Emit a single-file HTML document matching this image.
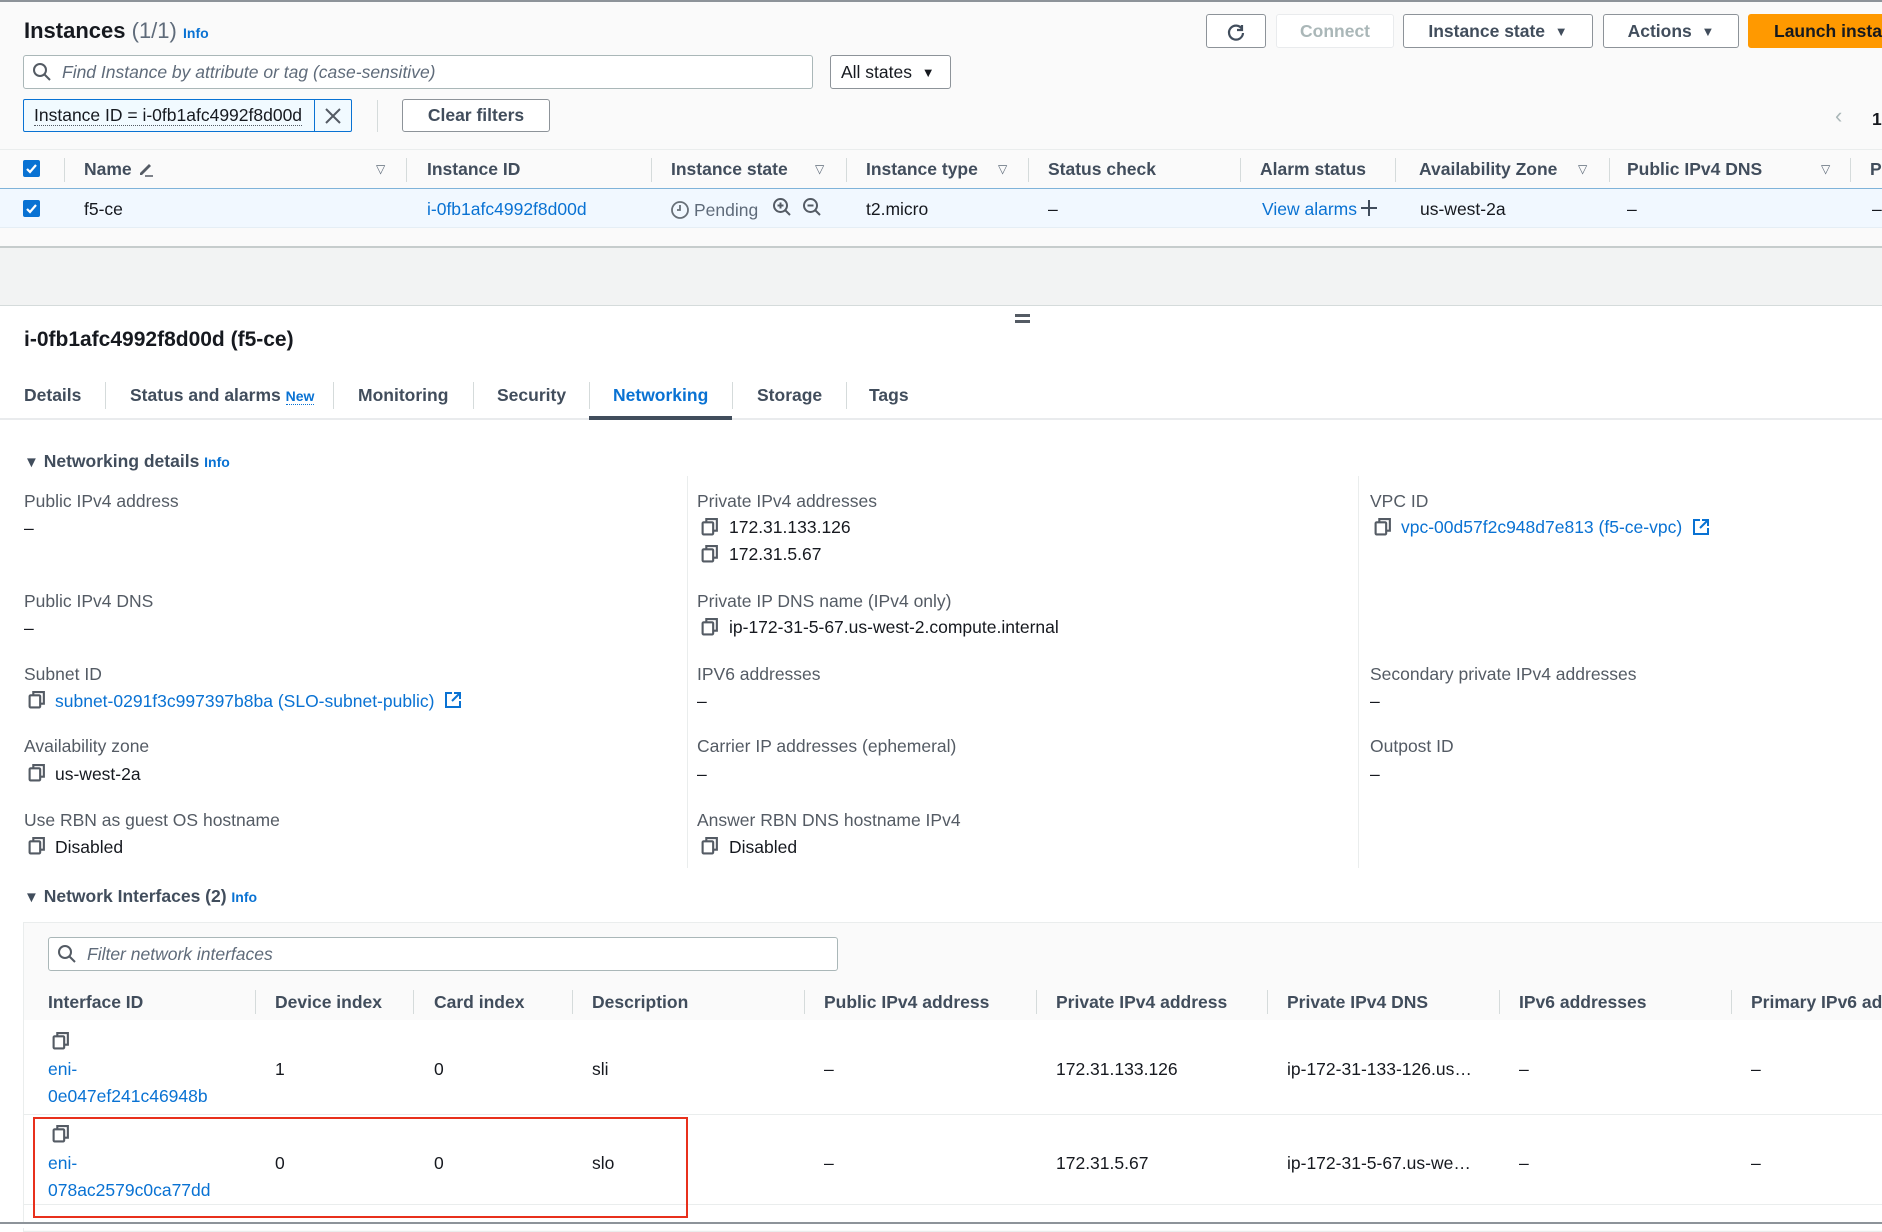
<!DOCTYPE html>
<html><head><meta charset="utf-8">
<style>
*{margin:0;padding:0;box-sizing:border-box}
body{width:1882px;height:1228px;overflow:hidden;background:#fff;font-family:"Liberation Sans",sans-serif;font-size:17.5px;color:#16191f;position:relative}
.a{position:absolute;white-space:nowrap;line-height:22px}
.b{font-weight:bold}
.lk{color:#0972d3}
.g{color:#5f6b7a}
.lbl{color:#545b64}
.hd{font-weight:bold;color:#414d5c}
.btn{position:absolute;border:1.5px solid #8d9399;border-radius:3px;background:#fff;font-weight:bold;color:#414d5c;display:flex;align-items:center;justify-content:center;font-size:17.5px;white-space:nowrap;overflow:hidden}
.sep{position:absolute;width:1px;background:#d5dbdb}
.cb{position:absolute;width:17px;height:17px;background:#0972d3;border-radius:2px}
.cp{position:absolute;width:18px;height:19px}
</style></head><body>
<div style="position:absolute;left:0;top:0;width:1882px;height:247px;background:#fafafa"></div>
<div style="position:absolute;left:0;top:0;width:1882px;height:2px;background:#8d9399"></div>
<div class="a" style="left:24px;top:18px;font-size:22px;line-height:26px"><span class="b">Instances</span> <span class="g">(1/1)</span> <span class="lk b" style="font-size:14px">Info</span></div>

<div class="btn" style="left:1206px;top:14px;width:60px;height:34px"><svg width="22" height="22" viewBox="0 0 22 22"><path d="M17 5v5h-5M17 9A7 7 0 1 0 18 13" fill="none" stroke="#414d5c" stroke-width="2.2"/></svg></div>
<div class="btn" style="left:1276px;top:14px;width:118px;height:34px;border-color:#e9ebed;color:#aab7b8">Connect</div>
<div class="btn" style="left:1403px;top:14px;width:190px;height:34px">Instance state&nbsp;&nbsp;<span style="font-size:13px">▼</span></div>
<div class="btn" style="left:1603px;top:14px;width:136px;height:34px">Actions&nbsp;&nbsp;<span style="font-size:13px">▼</span></div>
<div class="btn" style="left:1748px;top:14px;width:160px;height:34px;background:#ff9900;border-color:#ff9900;color:#16191f;justify-content:flex-start;padding-left:25px">Launch instances</div>

<div style="position:absolute;left:23px;top:55px;width:790px;height:34px;border:1.5px solid #aab7b8;border-radius:3px;background:#fff"></div>
<svg style="position:absolute;left:32px;top:62px" width="20" height="20" viewBox="0 0 20 20"><circle cx="8" cy="8" r="6" fill="none" stroke="#545b64" stroke-width="2"/><path d="M12.5 12.5L18 18" stroke="#545b64" stroke-width="2"/></svg>
<div class="a g" style="left:62px;top:61px;font-style:italic">Find Instance by attribute or tag (case-sensitive)</div>
<div class="btn" style="left:830px;top:55px;width:121px;height:34px;font-weight:normal;color:#16191f;justify-content:flex-start;padding-left:10px">All states&nbsp;&nbsp;<span style="font-size:13px">▼</span></div>

<div style="position:absolute;left:23px;top:99px;width:329px;height:33px;border:1px solid #0972d3;background:#f1faff;border-radius:2px"></div>
<div style="position:absolute;left:314px;top:99px;width:1px;height:33px;background:#0972d3"></div>
<div class="a" style="left:34px;top:105px;border-bottom:1px dotted #545b64;line-height:20px">Instance ID = i-0fb1afc4992f8d00d</div>
<svg style="position:absolute;left:323px;top:106px" width="20" height="20" viewBox="0 0 20 20"><path d="M3 3L17 17M17 3L3 17" stroke="#545b64" stroke-width="2"/></svg>
<div class="sep" style="left:377px;top:100px;height:32px"></div>
<div class="btn" style="left:402px;top:99px;width:148px;height:33px">Clear filters</div>
<div class="a" style="left:1835px;top:105px;color:#aab7b8;font-size:22px">‹</div>
<div class="a b" style="left:1872px;top:108px">1</div>

<div style="position:absolute;left:0;top:149px;width:1882px;height:1px;background:#eaeded"></div>
<div style="position:absolute;left:0;top:188px;width:1882px;height:40px;background:#f1f8ff;border-top:1.5px solid #7fb3d9;border-bottom:1px solid #e5eef5"></div>
<div class="cb" style="left:23px;top:160px"></div><svg style="position:absolute;left:23px;top:160px" width="17" height="17"><path d="M4 9l3 3 6-7" stroke="#fff" stroke-width="2.2" fill="none"/></svg>
<div class="cb" style="left:23px;top:200px"></div><svg style="position:absolute;left:23px;top:200px" width="17" height="17"><path d="M4 9l3 3 6-7" stroke="#fff" stroke-width="2.2" fill="none"/></svg>
<div class="sep" style="left:64px;top:158px;height:24px"></div>
<div class="a hd" style="left:84px;top:158px">Name</div>
<svg style="position:absolute;left:137px;top:160px" width="18" height="18" viewBox="0 0 18 18"><path d="M3 13L12 4l2 2-9 9H3z" fill="#545b64"/><path d="M8 16h8" stroke="#545b64" stroke-width="1.5"/></svg>
<div class="a g" style="left:376px;top:158px;font-size:12px">▽</div>
<div class="sep" style="left:406px;top:158px;height:24px"></div>
<div class="a hd" style="left:427px;top:158px">Instance ID</div>
<div class="sep" style="left:651px;top:158px;height:24px"></div>
<div class="a hd" style="left:671px;top:158px">Instance state</div>
<div class="a g" style="left:815px;top:158px;font-size:12px">▽</div>
<div class="sep" style="left:846px;top:158px;height:24px"></div>
<div class="a hd" style="left:866px;top:158px">Instance type</div>
<div class="a g" style="left:998px;top:158px;font-size:12px">▽</div>
<div class="sep" style="left:1028px;top:158px;height:24px"></div>
<div class="a hd" style="left:1048px;top:158px">Status check</div>
<div class="sep" style="left:1240px;top:158px;height:24px"></div>
<div class="a hd" style="left:1260px;top:158px">Alarm status</div>
<div class="sep" style="left:1395px;top:158px;height:24px"></div>
<div class="a hd" style="left:1419px;top:158px">Availability Zone</div>
<div class="a g" style="left:1578px;top:158px;font-size:12px">▽</div>
<div class="sep" style="left:1609px;top:158px;height:24px"></div>
<div class="a hd" style="left:1627px;top:158px">Public IPv4 DNS</div>
<div class="a g" style="left:1821px;top:158px;font-size:12px">▽</div>
<div class="sep" style="left:1850px;top:158px;height:24px"></div>
<div class="a hd" style="left:1870px;top:158px">P</div>

<div class="a" style="left:84px;top:198px">f5-ce</div>
<div class="a lk" style="left:427px;top:198px">i-0fb1afc4992f8d00d</div>
<svg style="position:absolute;left:670px;top:200px" width="20" height="20" viewBox="0 0 20 20"><circle cx="10" cy="10" r="8" fill="none" stroke="#687078" stroke-width="1.8"/><path d="M10 5v5H7" stroke="#687078" stroke-width="1.8" fill="none"/></svg>
<div class="a g" style="left:694px;top:199px">Pending</div>
<svg style="position:absolute;left:772px;top:197px" width="20" height="20" viewBox="0 0 20 20"><circle cx="8.5" cy="8.5" r="6.5" fill="none" stroke="#545b64" stroke-width="2"/><path d="M13 13l5 5M5.5 8.5h6M8.5 5.5v6" stroke="#545b64" stroke-width="2"/></svg>
<svg style="position:absolute;left:802px;top:197px" width="20" height="20" viewBox="0 0 20 20"><circle cx="8.5" cy="8.5" r="6.5" fill="none" stroke="#545b64" stroke-width="2"/><path d="M13 13l5 5M5.5 8.5h6" stroke="#545b64" stroke-width="2"/></svg>
<div class="a" style="left:866px;top:198px">t2.micro</div>
<div class="a" style="left:1048px;top:198px">–</div>
<div class="a lk" style="left:1262px;top:198px">View alarms</div>
<svg style="position:absolute;left:1360px;top:199px" width="18" height="18" viewBox="0 0 18 18"><path d="M9 1v16M1 9h16" stroke="#414d5c" stroke-width="2"/></svg>
<div class="a" style="left:1420px;top:198px">us-west-2a</div>
<div class="a" style="left:1627px;top:198px">–</div>
<div class="a" style="left:1872px;top:198px">–</div>

<div style="position:absolute;left:0;top:246px;width:1882px;height:60px;background:#f2f3f3;border-top:2px solid #c6cccc;border-bottom:1.5px solid #d5dbdb"></div>
<div style="position:absolute;left:1015px;top:314px;width:15px;height:2.5px;background:#545b64"></div>
<div style="position:absolute;left:1015px;top:320px;width:15px;height:2.5px;background:#545b64"></div>

<div class="a b" style="left:24px;top:327px;font-size:21px;line-height:26px">i-0fb1afc4992f8d00d (f5-ce)</div>

<div class="a hd" style="left:24px;top:384px">Details</div>
<div class="sep" style="left:105px;top:382px;height:27px"></div>
<div class="a hd" style="left:130px;top:384px">Status and alarms <span class="lk" style="font-size:14px;border-bottom:1px dotted #0972d3">New</span></div>
<div class="sep" style="left:333px;top:382px;height:27px"></div>
<div class="a hd" style="left:358px;top:384px">Monitoring</div>
<div class="sep" style="left:473px;top:382px;height:27px"></div>
<div class="a hd" style="left:497px;top:384px">Security</div>
<div class="sep" style="left:589px;top:382px;height:27px"></div>
<div class="a b lk" style="left:613px;top:384px">Networking</div>
<div class="sep" style="left:732px;top:382px;height:27px"></div>
<div class="a hd" style="left:757px;top:384px">Storage</div>
<div class="sep" style="left:846px;top:382px;height:27px"></div>
<div class="a hd" style="left:869px;top:384px">Tags</div>
<div style="position:absolute;left:0;top:418px;width:1882px;height:2px;background:#e9ebed"></div>
<div style="position:absolute;left:589px;top:416px;width:143px;height:4px;background:#414d5c"></div>

<div class="a b" style="left:24px;top:450px;color:#414d5c"><span style="font-size:15px">▼</span> Networking details <span class="lk" style="font-size:14px">Info</span></div>
<div class="sep" style="left:687px;top:476px;height:392px;background:#eaeded"></div>
<div class="sep" style="left:1358px;top:476px;height:392px;background:#eaeded"></div>

<div class="a lbl" style="left:24px;top:490px">Public IPv4 address</div>
<div class="a" style="left:24px;top:517px">–</div>
<div class="a lbl" style="left:24px;top:590px">Public IPv4 DNS</div>
<div class="a" style="left:24px;top:617px">–</div>
<div class="a lbl" style="left:24px;top:663px">Subnet ID</div>
<svg class="cp" style="left:28px;top:690px" viewBox="0 0 17 18"><rect x="1.5" y="5" width="10" height="11.5" rx="1" fill="none" stroke="#545b64" stroke-width="2"/><path d="M5 5V2h10v11h-3.5" fill="none" stroke="#545b64" stroke-width="2"/></svg>
<div class="a lk" style="left:55px;top:690px">subnet-0291f3c997397b8ba (SLO-subnet-public)</div>
<svg style="position:absolute;left:444px;top:691px" width="18" height="18" viewBox="0 0 18 18"><path d="M8 2H2v14h14v-6" fill="none" stroke="#0972d3" stroke-width="2"/><path d="M10 2h6v6M16 2L8 10" fill="none" stroke="#0972d3" stroke-width="2"/></svg>
<div class="a lbl" style="left:24px;top:735px">Availability zone</div>
<svg class="cp" style="left:28px;top:763px" viewBox="0 0 17 18"><rect x="1.5" y="5" width="10" height="11.5" rx="1" fill="none" stroke="#545b64" stroke-width="2"/><path d="M5 5V2h10v11h-3.5" fill="none" stroke="#545b64" stroke-width="2"/></svg>
<div class="a" style="left:55px;top:763px">us-west-2a</div>
<div class="a lbl" style="left:24px;top:809px">Use RBN as guest OS hostname</div>
<svg class="cp" style="left:28px;top:836px" viewBox="0 0 17 18"><rect x="1.5" y="5" width="10" height="11.5" rx="1" fill="none" stroke="#545b64" stroke-width="2"/><path d="M5 5V2h10v11h-3.5" fill="none" stroke="#545b64" stroke-width="2"/></svg>
<div class="a" style="left:55px;top:836px">Disabled</div>

<div class="a lbl" style="left:697px;top:490px">Private IPv4 addresses</div>
<svg class="cp" style="left:701px;top:517px" viewBox="0 0 17 18"><rect x="1.5" y="5" width="10" height="11.5" rx="1" fill="none" stroke="#545b64" stroke-width="2"/><path d="M5 5V2h10v11h-3.5" fill="none" stroke="#545b64" stroke-width="2"/></svg>
<div class="a" style="left:729px;top:516px">172.31.133.126</div>
<svg class="cp" style="left:701px;top:544px" viewBox="0 0 17 18"><rect x="1.5" y="5" width="10" height="11.5" rx="1" fill="none" stroke="#545b64" stroke-width="2"/><path d="M5 5V2h10v11h-3.5" fill="none" stroke="#545b64" stroke-width="2"/></svg>
<div class="a" style="left:729px;top:543px">172.31.5.67</div>
<div class="a lbl" style="left:697px;top:590px">Private IP DNS name (IPv4 only)</div>
<svg class="cp" style="left:701px;top:617px" viewBox="0 0 17 18"><rect x="1.5" y="5" width="10" height="11.5" rx="1" fill="none" stroke="#545b64" stroke-width="2"/><path d="M5 5V2h10v11h-3.5" fill="none" stroke="#545b64" stroke-width="2"/></svg>
<div class="a" style="left:729px;top:616px">ip-172-31-5-67.us-west-2.compute.internal</div>
<div class="a lbl" style="left:697px;top:663px">IPV6 addresses</div>
<div class="a" style="left:697px;top:690px">–</div>
<div class="a lbl" style="left:697px;top:735px">Carrier IP addresses (ephemeral)</div>
<div class="a" style="left:697px;top:763px">–</div>
<div class="a lbl" style="left:697px;top:809px">Answer RBN DNS hostname IPv4</div>
<svg class="cp" style="left:701px;top:836px" viewBox="0 0 17 18"><rect x="1.5" y="5" width="10" height="11.5" rx="1" fill="none" stroke="#545b64" stroke-width="2"/><path d="M5 5V2h10v11h-3.5" fill="none" stroke="#545b64" stroke-width="2"/></svg>
<div class="a" style="left:729px;top:836px">Disabled</div>

<div class="a lbl" style="left:1370px;top:490px">VPC ID</div>
<svg class="cp" style="left:1374px;top:517px" viewBox="0 0 17 18"><rect x="1.5" y="5" width="10" height="11.5" rx="1" fill="none" stroke="#545b64" stroke-width="2"/><path d="M5 5V2h10v11h-3.5" fill="none" stroke="#545b64" stroke-width="2"/></svg>
<div class="a lk" style="left:1401px;top:516px">vpc-00d57f2c948d7e813 (f5-ce-vpc)</div>
<svg style="position:absolute;left:1692px;top:518px" width="18" height="18" viewBox="0 0 18 18"><path d="M8 2H2v14h14v-6" fill="none" stroke="#0972d3" stroke-width="2"/><path d="M10 2h6v6M16 2L8 10" fill="none" stroke="#0972d3" stroke-width="2"/></svg>
<div class="a lbl" style="left:1370px;top:663px">Secondary private IPv4 addresses</div>
<div class="a" style="left:1370px;top:690px">–</div>
<div class="a lbl" style="left:1370px;top:735px">Outpost ID</div>
<div class="a" style="left:1370px;top:763px">–</div>

<div class="a b" style="left:24px;top:885px;color:#414d5c"><span style="font-size:15px">▼</span> Network Interfaces (2) <span class="lk" style="font-size:14px">Info</span></div>
<div style="position:absolute;left:23px;top:922px;width:1870px;height:310px;border:1px solid #eaeded;background:#fafafa"></div>
<div style="position:absolute;left:24px;top:1020px;width:1860px;height:210px;background:#fff"></div>
<div style="position:absolute;left:48px;top:937px;width:790px;height:34px;border:1.5px solid #aab7b8;border-radius:3px;background:#fff"></div>
<svg style="position:absolute;left:57px;top:944px" width="20" height="20" viewBox="0 0 20 20"><circle cx="8" cy="8" r="6" fill="none" stroke="#545b64" stroke-width="2"/><path d="M12.5 12.5L18 18" stroke="#545b64" stroke-width="2"/></svg>
<div class="a g" style="left:87px;top:943px;font-style:italic">Filter network interfaces</div>

<div class="a hd" style="left:48px;top:991px">Interface ID</div>
<div class="sep" style="left:255px;top:990px;height:24px"></div>
<div class="a hd" style="left:275px;top:991px">Device index</div>
<div class="sep" style="left:413px;top:990px;height:24px"></div>
<div class="a hd" style="left:434px;top:991px">Card index</div>
<div class="sep" style="left:572px;top:990px;height:24px"></div>
<div class="a hd" style="left:592px;top:991px">Description</div>
<div class="sep" style="left:804px;top:990px;height:24px"></div>
<div class="a hd" style="left:824px;top:991px">Public IPv4 address</div>
<div class="sep" style="left:1036px;top:990px;height:24px"></div>
<div class="a hd" style="left:1056px;top:991px">Private IPv4 address</div>
<div class="sep" style="left:1267px;top:990px;height:24px"></div>
<div class="a hd" style="left:1287px;top:991px">Private IPv4 DNS</div>
<div class="sep" style="left:1499px;top:990px;height:24px"></div>
<div class="a hd" style="left:1519px;top:991px">IPv6 addresses</div>
<div class="sep" style="left:1731px;top:990px;height:24px"></div>
<div class="a hd" style="left:1751px;top:991px">Primary IPv6 address</div>

<svg class="cp" style="left:52px;top:1031px" viewBox="0 0 17 18"><rect x="1.5" y="5" width="10" height="11.5" rx="1" fill="none" stroke="#545b64" stroke-width="2"/><path d="M5 5V2h10v11h-3.5" fill="none" stroke="#545b64" stroke-width="2"/></svg>
<div class="a lk" style="left:48px;top:1058px">eni-</div>
<div class="a lk" style="left:48px;top:1085px">0e047ef241c46948b</div>
<div class="a" style="left:275px;top:1058px">1</div>
<div class="a" style="left:434px;top:1058px">0</div>
<div class="a" style="left:592px;top:1058px">sli</div>
<div class="a" style="left:824px;top:1058px">–</div>
<div class="a" style="left:1056px;top:1058px">172.31.133.126</div>
<div class="a" style="left:1287px;top:1058px">ip-172-31-133-126.us…</div>
<div class="a" style="left:1519px;top:1058px">–</div>
<div class="a" style="left:1751px;top:1058px">–</div>
<div style="position:absolute;left:24px;top:1114px;width:1860px;height:1px;background:#eaeded"></div>

<svg class="cp" style="left:52px;top:1124px" viewBox="0 0 17 18"><rect x="1.5" y="5" width="10" height="11.5" rx="1" fill="none" stroke="#545b64" stroke-width="2"/><path d="M5 5V2h10v11h-3.5" fill="none" stroke="#545b64" stroke-width="2"/></svg>
<div class="a lk" style="left:48px;top:1152px">eni-</div>
<div class="a lk" style="left:48px;top:1179px">078ac2579c0ca77dd</div>
<div class="a" style="left:275px;top:1152px">0</div>
<div class="a" style="left:434px;top:1152px">0</div>
<div class="a" style="left:592px;top:1152px">slo</div>
<div class="a" style="left:824px;top:1152px">–</div>
<div class="a" style="left:1056px;top:1152px">172.31.5.67</div>
<div class="a" style="left:1287px;top:1152px">ip-172-31-5-67.us-we…</div>
<div class="a" style="left:1519px;top:1152px">–</div>
<div class="a" style="left:1751px;top:1152px">–</div>
<div style="position:absolute;left:24px;top:1204px;width:1860px;height:1px;background:#eaeded"></div>

<div style="position:absolute;left:33px;top:1117px;width:655px;height:101px;border:2px solid #e8301c"></div>
<div style="position:absolute;left:0;top:1222px;width:1882px;height:6px;background:#fff;border-top:2px solid #8d9399"></div>
</body></html>
